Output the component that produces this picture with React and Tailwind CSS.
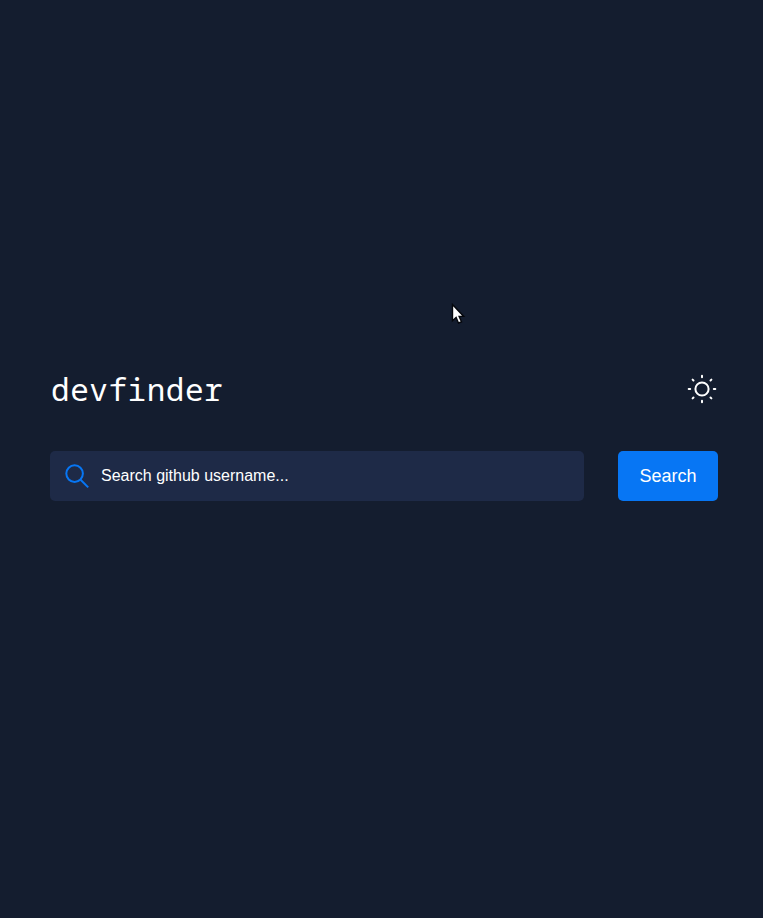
function SunIcon() {
  return (
    <svg width="30" height="30" viewBox="0 0 30 30" fill="none" stroke="#fff" strokeWidth="2">
      <circle cx="15" cy="15" r="6.6" />
      <path
        strokeLinecap="round"
        d="M15 1.7v1.5M15 26.8v1.5M1.7 15h1.5M26.8 15h1.5M5.6 5.6l.9.9M23.5 23.5l.9.9M5.6 24.4l.9-.9M23.5 6.5l.9-.9"
      />
    </svg>
  );
}

function SearchIcon() {
  return (
    <svg width="26" height="26" viewBox="0 0 26 26" fill="none" stroke="#0776f4" strokeWidth="2">
      <circle cx="10.6" cy="10.6" r="8.3" />
      <path d="M16.6 16.8l7.6 7.6" />
    </svg>
  );
}

function Pointer() {
  return (
    <svg className="absolute left-[451px] top-[303px]" width="16" height="22" viewBox="0 0 16 22">
      <path
        d="M1.5 1.5v16.2l3.6-3.3 2.4 5.6 3-1.2-2.4-5.4h4.6z"
        fill="#fff"
        stroke="#05070c"
        strokeWidth="1.4"
      />
    </svg>
  );
}

export default function App() {
  return (
    <main className="relative flex h-screen flex-col bg-[#141d2f] pr-[45px] pl-[50px] pt-[365px] font-['Liberation_Sans',Arial,sans-serif] text-white">
      <header className="flex h-12 items-center justify-between">
        <h1 className="pl-px font-['Noto_Sans_Mono','DejaVu_Sans_Mono',monospace] text-[31px] leading-[48px] tracking-[0.54px]">devfinder</h1>
        <button aria-label="Light theme" className="mr-px">
          <SunIcon />
        </button>
      </header>
      <form className="mt-[38px] flex h-[50px] justify-between">
        <label className="flex w-[534px] items-center rounded-[5px] bg-[#1e2a47] pl-[14px]">
          <SearchIcon />
          <input
            className="ml-[11px] flex-1 bg-transparent text-base text-white outline-none placeholder:text-white"
            placeholder="Search github username..."
          />
        </label>
        <button type="button" className="w-[100px] rounded-[5px] bg-[#0776f4] text-lg">
          Search
        </button>
      </form>
      <Pointer />
    </main>
  );
}
